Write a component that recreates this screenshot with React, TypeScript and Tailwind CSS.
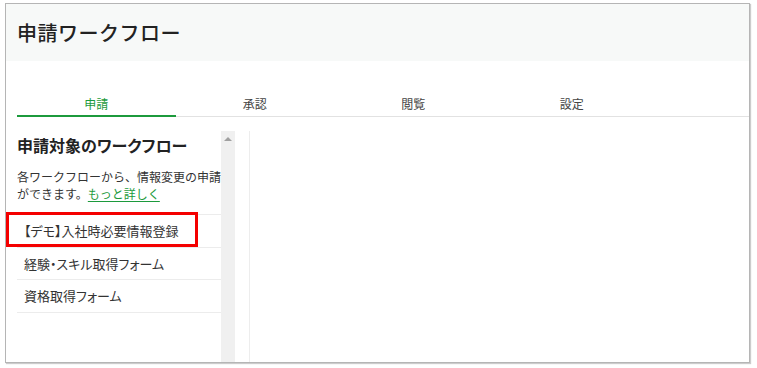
import React from "react";

const tabs = ["申請", "承認", "閲覧", "設定"];
const flows = ["【デモ】入社時必要情報登録", "経験・スキル取得フォーム", "資格取得フォーム"];

const App = () => {
  return (
    <div
      className="w-[757px] h-[368px] bg-white pt-[3px] pl-[5px] text-[#333]"
      style={{ fontFamily: '"Noto Sans CJK JP", "Noto Sans", sans-serif' }}
    >
      <div className="relative w-[745px] h-[360px] border border-[#b5b5b5] shadow-[1px_1px_1px_rgba(0,0,0,0.2)] flex flex-col overflow-hidden">
        {/* Header */}
        <div className="h-[57px] bg-[#f7f9f8] pl-[11px] flex items-center">
          <h1 className="text-[20px] leading-none font-medium text-[#222] tracking-[0.5px]">申請ワークフロー</h1>
        </div>

        {/* Tabs */}
        <div className="mt-[32px] ml-[11px] flex border-b border-[#e2e2e2] h-[24px]">
          {tabs.map((tab, i) => (
            <div
              key={tab}
              className={
                i === 0
                  ? "w-[158.5px] text-center text-[12px] leading-[22px] text-[#1c9a3c] border-b-2 border-[#1c9a3c] -mb-px"
                  : "w-[158.5px] text-center text-[12px] leading-[22px] text-[#444]"
              }
            >
              {tab}
            </div>
          ))}
        </div>

        {/* Body */}
        <div className="flex flex-1 pt-[14px] pl-[11px]">
          <div className="w-[204px] flex flex-col">
            <h2 className="mt-[4px] text-[16px] leading-[20px] font-bold text-[#222] [font-feature-settings:'palt']">
              申請対象のワークフロー
            </h2>
            <p className="mt-[13px] text-[12px] leading-[17px] text-[#333]">
              各ワークフローから、情報変更の申請ができます。
              <a className="text-[#1c9a3c] underline underline-offset-2">もっと詳しく</a>
            </p>
            <ul className="mt-[12px] border-t border-[#ececec]">
              {flows.map((f) => (
                <li
                  key={f}
                  className="h-[32.5px] border-b border-[#ececec] flex items-center pl-[7px] text-[13px] text-[#333] [font-feature-settings:'palt']"
                >
                  {f}
                </li>
              ))}
            </ul>
          </div>
          {/* Scrollbar */}
          <div className="w-[14px] bg-[#f0f0f0] flex justify-center pt-[6px]">
            <div className="w-0 h-0 border-l-[4px] border-r-[4px] border-b-[4px] border-l-transparent border-r-transparent border-b-[#a0a0a0]" />
          </div>
          <div className="ml-[14px] flex-1 border-l border-[#ededed]" />
        </div>

        {/* Highlight annotation */}
        <div className="absolute left-0 top-[208px] w-[192px] h-[35px] border-[3px] border-[#f40000]" />
      </div>
    </div>
  );
};

export default App;
